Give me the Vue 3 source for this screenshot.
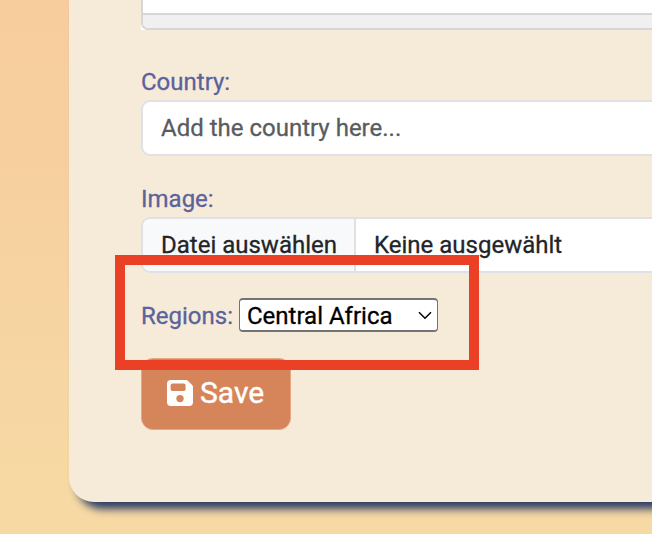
<script setup>
import { ref } from 'vue'

const country = ref('')
const region = ref('Central Africa')
const regions = ['Central Africa']
</script>

<template>
  <main class="page">
    <form class="card" @submit.prevent>
      <div class="editor">
        <div class="editor-frame">
          <div class="editor-body"></div>
          <div class="editor-status"></div>
        </div>
      </div>

      <div class="field">
        <label class="label" for="country">Country:</label>
        <input id="country" v-model="country" class="control" type="text" placeholder="Add the country here..." />
      </div>

      <div class="field">
        <span class="label">Image:</span>
        <div class="file">
          <span class="file-button">Datei auswählen</span>
          <span class="file-name">Keine ausgewählt</span>
        </div>
      </div>

      <div class="region-row">
        <label class="label" for="region">Regions:</label>
        <div class="select-wrap">
          <select id="region" v-model="region" class="select">
            <option v-for="r in regions" :key="r">{{ r }}</option>
          </select>
          <svg class="chevron" viewBox="0 0 14 9" fill="none">
            <path d="M1 1.2 7 7.2 13 1.2" stroke="#000" stroke-width="1.5" />
          </svg>
        </div>
      </div>

      <button class="save" type="submit">
        <svg class="save-icon" viewBox="0 0 26 26" fill="#fff">
          <path fill-rule="evenodd" d="M4 0H19Q20.2 0 21.1 .9L25.1 4.9Q26 5.8 26 7V22.300Q26 26 22.300 26H3.700Q0 26 0 22.300V3.700Q0 0 4 0ZM5.400 3.600Q3.600 3.600 3.600 5.400V9.300Q3.600 11.100 5.400 11.100H16.800Q18.600 11.100 18.600 9.300V5.400Q18.600 3.600 16.800 3.600ZM13 14.900A3.700 3.700 0 1 0 13 22.300 3.700 3.700 0 1 0 13 14.900Z" />
        </svg>
        <span>Save</span>
      </button>
    </form>
    <div class="highlight"></div>
  </main>
</template>

<style>
body {
  margin: 0;
  overflow: hidden;
}
</style>

<style scoped>
.page {
  position: relative;
  box-sizing: border-box;
  width: 652px;
  height: 534px;
  padding-left: 69px;
  overflow: hidden;
  background: linear-gradient(#f7cd9e 0%, #f7cf9f 30%, #f6d7a3 75%, #f7daa3 100%);
  font-family: Roboto, sans-serif;
  font-size: 24px;
  -webkit-text-stroke: 0.3px;
}
.card {
  box-sizing: border-box;
  width: 700px;
  height: 501.5px;
  padding-left: 72px;
  border-radius: 0 0 0 25px;
  background: #f6ebd9;
  box-shadow: 8px 7px 8px #2c3b64;
}
.editor {
  height: 30px;
  margin-bottom: 34px;
  background: linear-gradient(to right, #fff 4px, transparent 4px);
}
.editor-frame {
  display: flex;
  flex-direction: column;
  box-sizing: border-box;
  height: 30px;
  border: solid #d6d6d6;
  border-width: 0 0 2px 2px;
  border-radius: 0 0 0 7px;
  overflow: hidden;
  background: #fff;
}
.editor-body {
  flex: 1;
}
.editor-status {
  height: 13px;
  border-top: 2px solid #d6d6d6;
  background: #f0f0f0;
}
.field {
  display: flex;
  flex-direction: column;
  margin-bottom: 25px;
}
.label {
  color: #5b629c;
  line-height: 36px;
}
.control,
.file {
  box-sizing: border-box;
  height: 56px;
  width: 100%;
  border: 2px solid #dfe2e5;
  border-radius: 9px;
  background: #fff;
  color: #212529;
  font: inherit;
}
.control {
  padding: 0 18px;
  outline: none;
}
.control::placeholder {
  color: #595c5f;
  opacity: 1;
}
.file {
  display: flex;
  overflow: hidden;
  line-height: 52px;
}
.file-button {
  box-sizing: border-box;
  width: 213px;
  padding-left: 18px;
  border-right: 2px solid #dfe2e5;
  background: #f8f9fa;
  white-space: nowrap;
}
.file-name {
  padding-left: 18px;
}
.region-row {
  display: flex;
  align-items: center;
  gap: 6px;
  height: 34px;
}
.region-row .label {
  width: 92px;
  padding-top: 2px;
}
.select-wrap {
  display: grid;
  align-items: center;
  width: 199px;
}
.select {
  grid-area: 1 / 1;
  appearance: none;
  box-sizing: border-box;
  width: 199px;
  height: 34px;
  padding: 1px 7px 0;
  border: solid #727375;
  border-width: 2px 1px;
  border-radius: 4px;
  background: #fff;
  color: #000;
  font: inherit;
}
.chevron {
  grid-area: 1 / 1;
  justify-self: end;
  width: 14px;
  height: 9px;
  margin-right: 6px;
  pointer-events: none;
}
.save {
  display: flex;
  align-items: center;
  gap: 7px;
  box-sizing: border-box;
  width: 150px;
  height: 72px;
  margin-top: 26px;
  padding: 0 0 3px 25px;
  border: 1px solid #e6a683;
  border-radius: 12px;
  background: #d6855a;
  color: #fff;
  font: 30px Roboto, sans-serif;
  -webkit-text-stroke: 0.4px;
}
.save-icon {
  width: 26px;
  height: 26px;
}
.highlight {
  position: absolute;
  left: 115px;
  top: 255px;
  box-sizing: border-box;
  width: 364px;
  height: 115px;
  border: 10px solid #ea4025;
  pointer-events: none;
}
</style>
